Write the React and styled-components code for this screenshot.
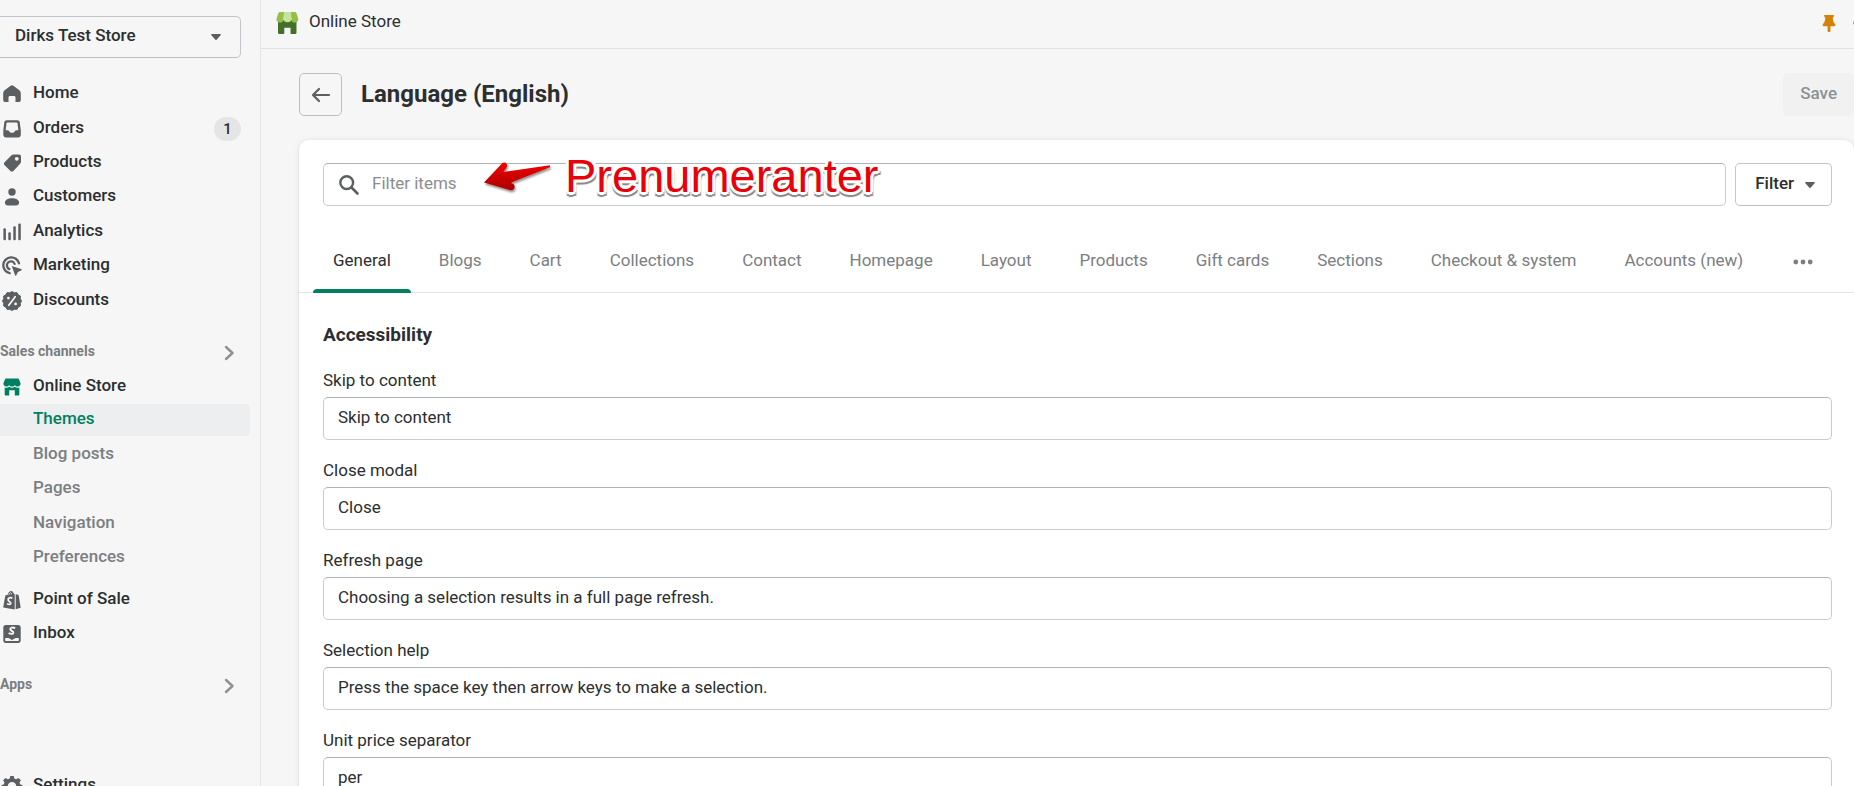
import React from 'react';
import styled, { createGlobalStyle } from 'styled-components';

const GlobalStyle = createGlobalStyle`
  * {
    box-sizing: border-box;
  }
  body {
    margin: 0;
    background: #f6f6f6;
    color: #2c2e30;
    font-family: Roboto, "Liberation Sans", sans-serif;
    font-size: 17px;
    line-height: 24px;
  }
  button, input {
    font: inherit;
    color: inherit;
  }
  ul {
    list-style: none;
    margin: 0;
    padding: 0;
  }
`;

const Page = styled.div`
  display: flex;
  height: 100vh;
  overflow: hidden;
`;

const Sidebar = styled.aside`
  flex: 0 0 261px;
  border-right: 1px solid #e4e5e7;
  padding: 16px 10px 0 0;
`;

const StoreButton = styled.button`
  display: flex;
  align-items: center;
  justify-content: space-between;
  width: 245px;
  height: 42px;
  margin: 0 0 19px -4px;
  padding: 0 19px 0 18px;
  border: 1px solid #c2c6ca;
  border-bottom-color: #babec3;
  border-radius: 5px;
  background: none;
  font-weight: 500;
`;

const Label = styled.span`
  padding-bottom: 4px;
`;

const NavList = styled.ul`
  display: grid;
  grid-auto-rows: 1fr;
  height: ${({ $height }) => $height}px;
  margin-top: ${({ $top = 0 }) => $top}px;
`;

const NavLink = styled.a`
  display: flex;
  align-items: center;
  height: 100%;
  gap: 9px;
  color: #2c2e30;
  font-weight: 500;
  text-decoration: none;
  svg {
    flex: none;
    color: ${({ $active }) => $active ? '#008060' : '#5c5f62'};
  }
`;

const Badge = styled.span`
  margin: 0 9px 0 auto;
  width: 27px;
  border-radius: 12px;
  background: #e4e5e7;
  font-size: 15px;
  text-align: center;
`;

const SubLink = styled.a`
  display: flex;
  align-items: center;
  height: 32px;
  padding-left: 33px;
  border-radius: 0 4px 4px 0;
  background: ${({ $active }) => $active ? '#edeeef' : 'none'};
  color: ${({ $active }) => $active ? '#008060' : '#7b7e82'};
  font-weight: 500;
  text-decoration: none;
`;

const SectionButton = styled.button`
  display: flex;
  align-items: center;
  justify-content: space-between;
  width: 100%;
  height: 34px;
  margin-top: 18px;
  padding: 0 15px 0 0;
  border: 0;
  background: none;
  color: #7b7e82;
  font-size: 14px;
  font-weight: 700;
`;

const Main = styled.main`
  flex: 1;
  min-width: 0;
`;

const TopBar = styled.header`
  display: flex;
  align-items: center;
  height: 49px;
  padding: 0 0 2px 15px;
  border-bottom: 1px solid #e1e3e5;
  overflow: hidden;
`;

const AppName = styled.span`
  flex: 1;
  padding: 0 0 4px 10px;
`;

const IconButton = styled.button`
  display: flex;
  flex: none;
  padding: 0;
  border: 0;
  background: none;
  color: #5c5f62;
`;

const TopActions = styled.div`
  display: flex;
  align-items: center;
  gap: 15px;
  margin-right: -21px;
`;

const TitleRow = styled.div`
  display: flex;
  align-items: center;
  padding: 24px 0 24px 38px;
`;

const BackButton = styled.button`
  display: flex;
  align-items: center;
  justify-content: center;
  width: 43px;
  height: 43px;
  padding: 0;
  border: 1px solid #babec3;
  border-radius: 5px;
  background: none;
  color: #5c5f62;
`;

const Title = styled.h1`
  flex: 1;
  margin: 0;
  padding: 0 0 2px 19px;
  font-size: 24px;
  font-weight: 700;
  line-height: 32px;
`;

const SaveButton = styled.button`
  height: 43px;
  padding: 0 17px 4px;
  border: 0;
  border-radius: 5px;
  background: #f1f1f1;
  color: #8c9196;
  font-weight: 500;
`;

const Card = styled.section`
  margin-left: 38px;
  border-radius: 10px 10px 0 0;
  background: #fff;
  box-shadow: 0 0 6px rgba(23, 24, 24, 0.08), 0 1px 2px rgba(0, 0, 0, 0.12);
`;

const FilterRow = styled.div`
  display: flex;
  gap: 9px;
  padding: 23px 22px 0 24px;
`;

const SearchBox = styled.div`
  position: relative;
  display: flex;
  flex: 1;
  align-items: center;
  height: 43px;
  padding-left: 13px;
  border: 1px solid #c9cccf;
  border-top-color: #aeb4b9;
  border-radius: 5px;
  color: #5c5f62;
`;

const SearchInput = styled.input`
  flex: 1;
  min-width: 0;
  padding: 0 0 4px 11px;
  border: 0;
  outline: 0;
  background: none;
  &::placeholder {
    color: #8a8d91;
    opacity: 1;
  }
`;

const FilterButton = styled.button`
  display: flex;
  align-items: center;
  gap: 11px;
  height: 43px;
  padding: 0 16px 0 19px;
  border: 1px solid #c2c6ca;
  border-bottom-color: #babec3;
  border-radius: 5px;
  background: #fff;
  font-weight: 500;
`;

// hand drawn hint lying over the search field
const Annotation = styled.div`
  position: absolute;
  left: 155px;
  top: -14px;
  display: flex;
  align-items: center;
  gap: 10px;
  pointer-events: none;
`;

const AnnotationText = styled.span`
  color: #ea0008;
  font-family: "Liberation Sans", Arial, sans-serif;
  font-size: 47px;
  line-height: 52px;
  text-shadow:
    -3px 0 #fff, 3px 0 #fff, 0 -3px #fff, 0 3px #fff,
    -2px -2px #fff, 2px -2px #fff, -2px 2px #fff, 2px 2px #fff,
    -2px 4px 1px #888, 0 5px 1px #888, 3px 4px 1px #888;
`;

const Tabs = styled.div`
  display: flex;
  gap: 8px;
  margin-top: 25px;
  padding: 0 14px;
  border-bottom: 1px solid #e1e3e5;
`;

const Tab = styled.button`
  position: relative;
  display: flex;
  align-items: center;
  flex: none;
  height: 61px;
  padding: 0 20px;
  border: 0;
  background: none;
  color: ${({ $active }) => $active ? '#2c2e30' : '#7b7e82'};
  &::after {
    content: '';
    position: absolute;
    left: 0;
    right: 0;
    bottom: -1px;
    height: 4px;
    border-radius: 4px 4px 0 0;
    background: ${({ $active }) => $active ? '#008060' : 'transparent'};
  }
`;

const Fields = styled.div`
  padding: 30px 22px 24px 24px;
`;

const Heading = styled.h2`
  margin: 0 0 21px;
  font-size: 19px;
  font-weight: 700;
  line-height: 24px;
`;

const Field = styled.div`
  margin-bottom: 18px;
  label {
    display: block;
    margin-bottom: 5px;
    line-height: 24px;
  }
`;

const TextInput = styled.input`
  display: block;
  width: 100%;
  height: 43px;
  padding: 0 14px 4px;
  border: 1px solid #c9cccf;
  border-top-color: #aeb4b9;
  border-radius: 5px;
  outline: 0;
  background: #fff;
`;

const Icon = ({ size = 24, children }) => (
  <svg width={size} height={size} viewBox="0 0 24 24" fill="currentColor" aria-hidden="true">
    {children}
  </svg>
);

const Caret = () => (
  <svg width="10" height="8" viewBox="0 0 10 8" fill="#5c5f62" aria-hidden="true">
    <path d="M1 1h8c.8 0 1 .7.6 1.3L5.8 6.6a1 1 0 0 1-1.6 0L.4 2.3C0 1.7.2 1 1 1z" />
  </svg>
);

const Chevron = () => (
  <svg width="11" height="16" viewBox="0 0 11 16" fill="none" stroke="#8c9196" strokeWidth="2.4" strokeLinecap="round" strokeLinejoin="round" aria-hidden="true">
    <path d="M2 2l6.5 6L2 14" />
  </svg>
);

const Dots = () => (
  <Icon>
    <circle cx="4.8" cy="12" r="2.4" />
    <circle cx="12" cy="12" r="2.4" />
    <circle cx="19.2" cy="12" r="2.4" />
  </Icon>
);

const HomeIcon = () => (
  <Icon>
    <path d="M12 3.3c.6 0 1.200.2 1.700.6l5.400 4.100c1.100.9 1.700 2 1.700 3.400v6.600c0 1.200-.9 2.100-2.100 2.100h-3.200v-4.600c0-.9-.6-1.500-1.500-1.500h-4c-.9 0-1.500.6-1.500 1.500v4.600H5.300c-1.200 0-2.100-.9-2.100-2.100v-6.600c0-1.400.6-2.500 1.700-3.400l5.400-4.100c.5-.4 1.100-.6 1.700-.6z" />
  </Icon>
);

const OrdersIcon = () => (
  <Icon>
    <path fillRule="evenodd" d="M6.900 3.200h10.200c1.600 0 2.500.8 2.700 2.300l1 8v4.300c0 1.600-1.100 2.700-2.700 2.700H6c-1.600 0-2.700-1.100-2.700-2.700v-4.300l1-8c.2-1.500 1.100-2.300 2.600-2.300zM7.400 5.600c-.6 0-.8.3-.9.9l-.8 6.800h2c.7 0 1.100.3 1.500.9.6 1 1.500 1.600 2.800 1.600s2.200-.6 2.800-1.600c.4-.6.8-.9 1.500-.9h2l-.8-6.800c-.1-.6-.3-.9-.9-.9z" />
  </Icon>
);

const ProductsIcon = () => (
  <Icon>
    <path fillRule="evenodd" d="M13.700 3.400h5.300c1.200 0 2 .8 2 2v5.200c0 .9-.3 1.600-.9 2.200l-6.700 7.100c-.9.9-2.100.9-3 0l-5.900-5.800c-.8-.9-.8-2 0-2.900l7-7c.6-.6 1.300-.8 2.200-.8zM16.800 5.900a1.900 1.900 0 1 0 0 3.800 1.900 1.900 0 0 0 0-3.800z" />
  </Icon>
);

const CustomersIcon = () => (
  <Icon>
    <circle cx="12" cy="7" r="3.700" />
    <path d="M12 13.200c3.500 0 7.100 1.500 7.100 4.200 0 1.800-1.200 3-3 3H7.900c-1.800 0-3-1.200-3-3 0-2.700 3.600-4.200 7.100-4.200z" />
  </Icon>
);

const AnalyticsIcon = () => (
  <Icon>
    <rect x="3.4" y="8.3" width="2.5" height="12" rx="1" />
    <rect x="8.3" y="12.2" width="2.5" height="8.1" rx="1" />
    <rect x="13.3" y="6.3" width="2.5" height="14" rx="1" />
    <rect x="18.3" y="3.5" width="2.5" height="16.8" rx="1" />
  </Icon>
);

const MarketingIcon = () => (
  <Icon>
    <g fill="none" stroke="currentColor" strokeWidth="2.3" strokeLinecap="round">
      <path d="M19 9.3A8 8 0 1 0 9.700 19.200" />
      <path d="M14.600 9.900A4 4 0 1 0 9.400 15.100" />
    </g>
    <path d="M11.700 11.900l9.400 3.200c.8.3.8 1 .1 1.300l-3.300 1.500-1.600 3.300c-.4.7-1.100.7-1.300-.1L11.700 11.900z" />
  </Icon>
);

const DiscountsIcon = () => (
  <Icon>
    <path d="M12 2.600l2.300 1.200 2.600-.2 1.300 2.200 2.200 1.300-.1 2.600L21.500 12l-1.200 2.300.1 2.600-2.200 1.300-1.300 2.200-2.600-.1L12 21.500l-2.300-1.200-2.600.1-1.300-2.200-2.200-1.300.1-2.600L2.500 12l1.200-2.300-.1-2.600 2.200-1.300 1.300-2.200 2.600.2z" stroke="currentColor" strokeLinejoin="round" />
    <path d="M15.200 7.800l-6.400 8.400" stroke="#f6f6f6" strokeWidth="1.8" strokeLinecap="round" />
    <circle cx="8.400" cy="9.1" r="1.4" fill="#f6f6f6" />
    <circle cx="15.600" cy="14.9" r="1.4" fill="#f6f6f6" />
  </Icon>
);

const StoreIcon = () => (
  <Icon>
    <path d="M5.400 3.600h13.200l1.900 4.400c.3 2.200-1 3.500-2.700 3.500-1.300 0-2.300-.6-2.900-1.600-.6 1-1.600 1.600-2.900 1.600s-2.300-.6-2.900-1.600c-.6 1-1.600 1.600-2.900 1.600-1.700 0-3-1.300-2.700-3.500z" />
    <path d="M4.700 12.500c2 .5 3.300.1 4.400-.7 1.900 1.200 3.900 1.200 5.800 0 1.100.8 2.400 1.200 4.400.7v7.100c0 .6-.4 1-1 1h-3.500v-5.300H9.200v5.300H5.700c-.6 0-1-.4-1-1z" />
  </Icon>
);

const PosIcon = () => (
  <Icon>
    <path d="M5.300 7.500l2.400-.7C8.300 4.400 9.600 3 11.200 3c1.300 0 2.100 1 2.400 2.500l1.100.4v15.700L3.200 19.500z" />
    <path d="M15.700 6.200l2.300.6c.4 0 .6.3.7.7l2 12.300-5 1.500z" />
    <path d="M8.700 7.200c.4-1.400 1-2.300 2-2.500.5.1.8.7.9 1.700" fill="none" stroke="#f6f6f6" strokeWidth=".8" />
    <path d="M12.400 10.300c-1.900-1.200-4.500-.4-4.300 1.600.2 1.800 2.900 1.900 2.700 3.500-.2 1.300-2.100 1.300-3.800.2" fill="none" stroke="#f6f6f6" strokeWidth="1.7" />
  </Icon>
);

const InboxIcon = () => (
  <Icon>
    <path fillRule="evenodd" d="M5.800 3h12.400c1.600 0 2.500.9 2.500 2.500v12.900c0 1.600-.9 2.500-2.500 2.500H5.800c-1.600 0-2.500-.9-2.500-2.500V5.500C3.300 3.900 4.200 3 5.800 3zM5.200 15.900v2.300c0 .6.3.9.9.9h11.800c.6 0 .9-.3.9-.9v-2.300h-3.200l-3.600 2-3.600-2z" />
    <path d="M15.200 6.200c-2.500-1.300-5.100-.5-4.900 1.200.2 1.600 3.300 1.500 3 3.300-.3 1.500-2.700 1.600-4.600.3" fill="none" stroke="#f6f6f6" strokeWidth="1.9" />
  </Icon>
);

const SettingsIcon = () => (
  <Icon>
    <path fillRule="evenodd" d="M10.300 2h3.400l.6 2.500 1.800.8 2.300-1.400L20.900 6.300l-1.400 2.300.8 1.800 2.100.5v3l-2.100.7-.8 1.800 1.400 2.300-2.500 2.400-2.300-1.400-1.800.8-.6 2.500h-3.400l-.6-2.500-1.800-.8-2.300 1.400-2.500-2.400 1.400-2.300-.8-1.800-2.100-.7v-3l2.100-.5.8-1.800-1.400-2.300 2.500-2.400 2.300 1.400 1.800-.8zM12 8a4.300 4.300 0 1 0 0 8.600A4.300 4.300 0 0 0 12 8z" />
  </Icon>
);

const StoreLogo = () => (
  <svg width="23" height="24" viewBox="0 0 23 24" aria-hidden="true">
    <path d="M2 9h18.500v12.500c0 1-.6 1.600-1.600 1.600h-3.400c-.6 0-1-.4-1-1v-5.400H8.300v5.400c0 .6-.4 1-1 1H3.600c-1 0-1.600-.6-1.600-1.600z" fill="#44702c" />
    <path d="M4.300 1h3.900L7.500 8.500c0 2.100-1.500 3.100-3.500 3.100-2.300 0-4-1.700-3.400-4L2.200 2.500C2.500 1.500 3.200 1 4.300 1zM18.500 1h-3.900l.7 7.500c0 2.100 1.500 3.100 3.500 3.100 2.300 0 4-1.700 3.400-4L20.600 2.500c-.3-1-1-1.500-2.100-1.500z" fill="#95c047" />
    <path d="M8 1h7l.5 7.300c0 2-1.800 3-4 3s-4-1-4-3z" fill="#c5e59a" />
  </svg>
);

const PinIcon = () => (
  <svg width="14" height="19" viewBox="0 0 14 19" fill="#d48207" aria-hidden="true">
    <path d="M3 1h8c.8 0 1 .6.8 1.200l-.9 1.600c-.2.4-.2.8-.1 1.200l.6 2.700 1.700 2.600c.6 1 .2 2-.9 2H8.400v4.400c0 .8-.5 1.300-1.400 1.300s-1.400-.5-1.400-1.300v-4.400H1.800c-1.100 0-1.500-1-.9-2l1.700-2.600L3.200 5c.1-.4.1-.8-.1-1.200l-.9-1.600C2 1.600 2.200 1 3 1z" />
  </svg>
);

const BackIcon = () => (
  <svg width="20" height="16" viewBox="0 0 20 16" fill="none" stroke="currentColor" strokeWidth="2.2" strokeLinecap="round" strokeLinejoin="round" aria-hidden="true">
    <path d="M18 8H2.200M8 2L2 8l6 6" />
  </svg>
);

const SearchIcon = () => (
  <Icon>
    <circle cx="9.700" cy="9.600" r="6.400" fill="none" stroke="currentColor" strokeWidth="2.4" />
    <path d="M14.500 14.500l6 6" stroke="currentColor" strokeWidth="2.6" strokeLinecap="round" />
  </Icon>
);

const RedArrow = () => (
  <svg width="76" height="38" viewBox="0 0 76 38" aria-hidden="true">
    <defs>
      <linearGradient id="arrowRed" x1="0" y1="0" x2="0" y2="1">
        <stop offset="0" stopColor="#f50006" />
        <stop offset="1" stopColor="#a80003" />
      </linearGradient>
      <filter id="arrowShadow" x="-10%" y="-10%" width="120%" height="140%">
        <feDropShadow dx="1" dy="2" stdDeviation="1" floodOpacity=".45" />
      </filter>
    </defs>
    <path d="M5 25.500L23.200 6.300c1.400-1.400 3.200-.9 4.300.5.9 1.200.7 2.400-.1 3.600l-3 4.600L71 8.300v2L34.500 24.500l-2.500 1.500 1.800.8c1.900.9 2.200 2.600 1.500 4.200-.7 1.600-2.200 2.600-3.900 2.200z" fill="url(#arrowRed)" filter="url(#arrowShadow)" />
  </svg>
);

const mainNav = [
  { label: 'Home', icon: <HomeIcon /> },
  { label: 'Orders', icon: <OrdersIcon />, badge: 1 },
  { label: 'Products', icon: <ProductsIcon /> },
  { label: 'Customers', icon: <CustomersIcon /> },
  { label: 'Analytics', icon: <AnalyticsIcon /> },
  { label: 'Marketing', icon: <MarketingIcon /> },
  { label: 'Discounts', icon: <DiscountsIcon /> },
];

const storeNav = ['Themes', 'Blog posts', 'Pages', 'Navigation', 'Preferences'];

const channelNav = [
  { label: 'Point of Sale', icon: <PosIcon /> },
  { label: 'Inbox', icon: <InboxIcon /> },
];

const tabs = ['General', 'Blogs', 'Cart', 'Collections', 'Contact', 'Homepage', 'Layout', 'Products', 'Gift cards', 'Sections', 'Checkout & system', 'Accounts (new)'];

const fields = [
  { id: 'skip', label: 'Skip to content', value: 'Skip to content' },
  { id: 'close', label: 'Close modal', value: 'Close' },
  { id: 'refresh', label: 'Refresh page', value: 'Choosing a selection results in a full page refresh.' },
  { id: 'selection', label: 'Selection help', value: 'Press the space key then arrow keys to make a selection.' },
  { id: 'unit', label: 'Unit price separator', value: 'per' },
];

const NavItem = ({ label, icon, badge, active }) => (
  <li>
    <NavLink href="#" $active={active}>
      {icon}
      <Label>{label}</Label>
      {badge && <Badge>{badge}</Badge>}
    </NavLink>
  </li>
);

const App = () => {
  return (
    <Page>
      <GlobalStyle />
      <Sidebar>
        <StoreButton>
          <Label>Dirks Test Store</Label>
          <Caret />
        </StoreButton>
        <nav>
          <NavList $height={241}>
            {mainNav.map((item) => <NavItem key={item.label} {...item} />)}
          </NavList>
          <SectionButton>
            <Label>Sales channels</Label>
            <Chevron />
          </SectionButton>
          <NavList $height={34}>
            <NavItem label="Online Store" icon={<StoreIcon />} active />
          </NavList>
          <NavList $height={173}>
            {storeNav.map((label) => (
              <li key={label}>
                <SubLink href="#" $active={label === 'Themes'}>
                  <Label>{label}</Label>
                </SubLink>
              </li>
            ))}
          </NavList>
          <NavList $height={68} $top={6}>
            {channelNav.map((item) => <NavItem key={item.label} {...item} />)}
          </NavList>
          <SectionButton>
            <Label>Apps</Label>
            <Chevron />
          </SectionButton>
          <NavList $height={34} $top={66}>
            <NavItem label="Settings" icon={<SettingsIcon />} />
          </NavList>
        </nav>
      </Sidebar>
      <Main>
        <TopBar>
          <StoreLogo />
          <AppName>Online Store</AppName>
          <TopActions>
            <IconButton aria-label="Pin"><PinIcon /></IconButton>
            <IconButton aria-label="More actions"><Dots /></IconButton>
          </TopActions>
        </TopBar>
        <TitleRow>
          <BackButton aria-label="Back"><BackIcon /></BackButton>
          <Title>Language (English)</Title>
          <SaveButton disabled>Save</SaveButton>
        </TitleRow>
        <Card>
          <FilterRow>
            <SearchBox>
              <SearchIcon />
              <SearchInput type="text" aria-label="Filter items" placeholder="Filter items" />
              <Annotation>
                <RedArrow />
                <AnnotationText>Prenumeranter</AnnotationText>
              </Annotation>
            </SearchBox>
            <FilterButton>
              <Label>Filter</Label>
              <Caret />
            </FilterButton>
          </FilterRow>
          <Tabs role="tablist">
            {tabs.map((tab) => (
              <Tab key={tab} role="tab" aria-selected={tab === 'General'} $active={tab === 'General'}>
                <Label>{tab}</Label>
              </Tab>
            ))}
            <Tab aria-label="More tabs"><Dots /></Tab>
          </Tabs>
          <Fields>
            <Heading>Accessibility</Heading>
            {fields.map(({ id, label, value }) => (
              <Field key={id}>
                <label htmlFor={id}>{label}</label>
                <TextInput id={id} type="text" defaultValue={value} />
              </Field>
            ))}
          </Fields>
        </Card>
      </Main>
    </Page>
  );
}

export default App
